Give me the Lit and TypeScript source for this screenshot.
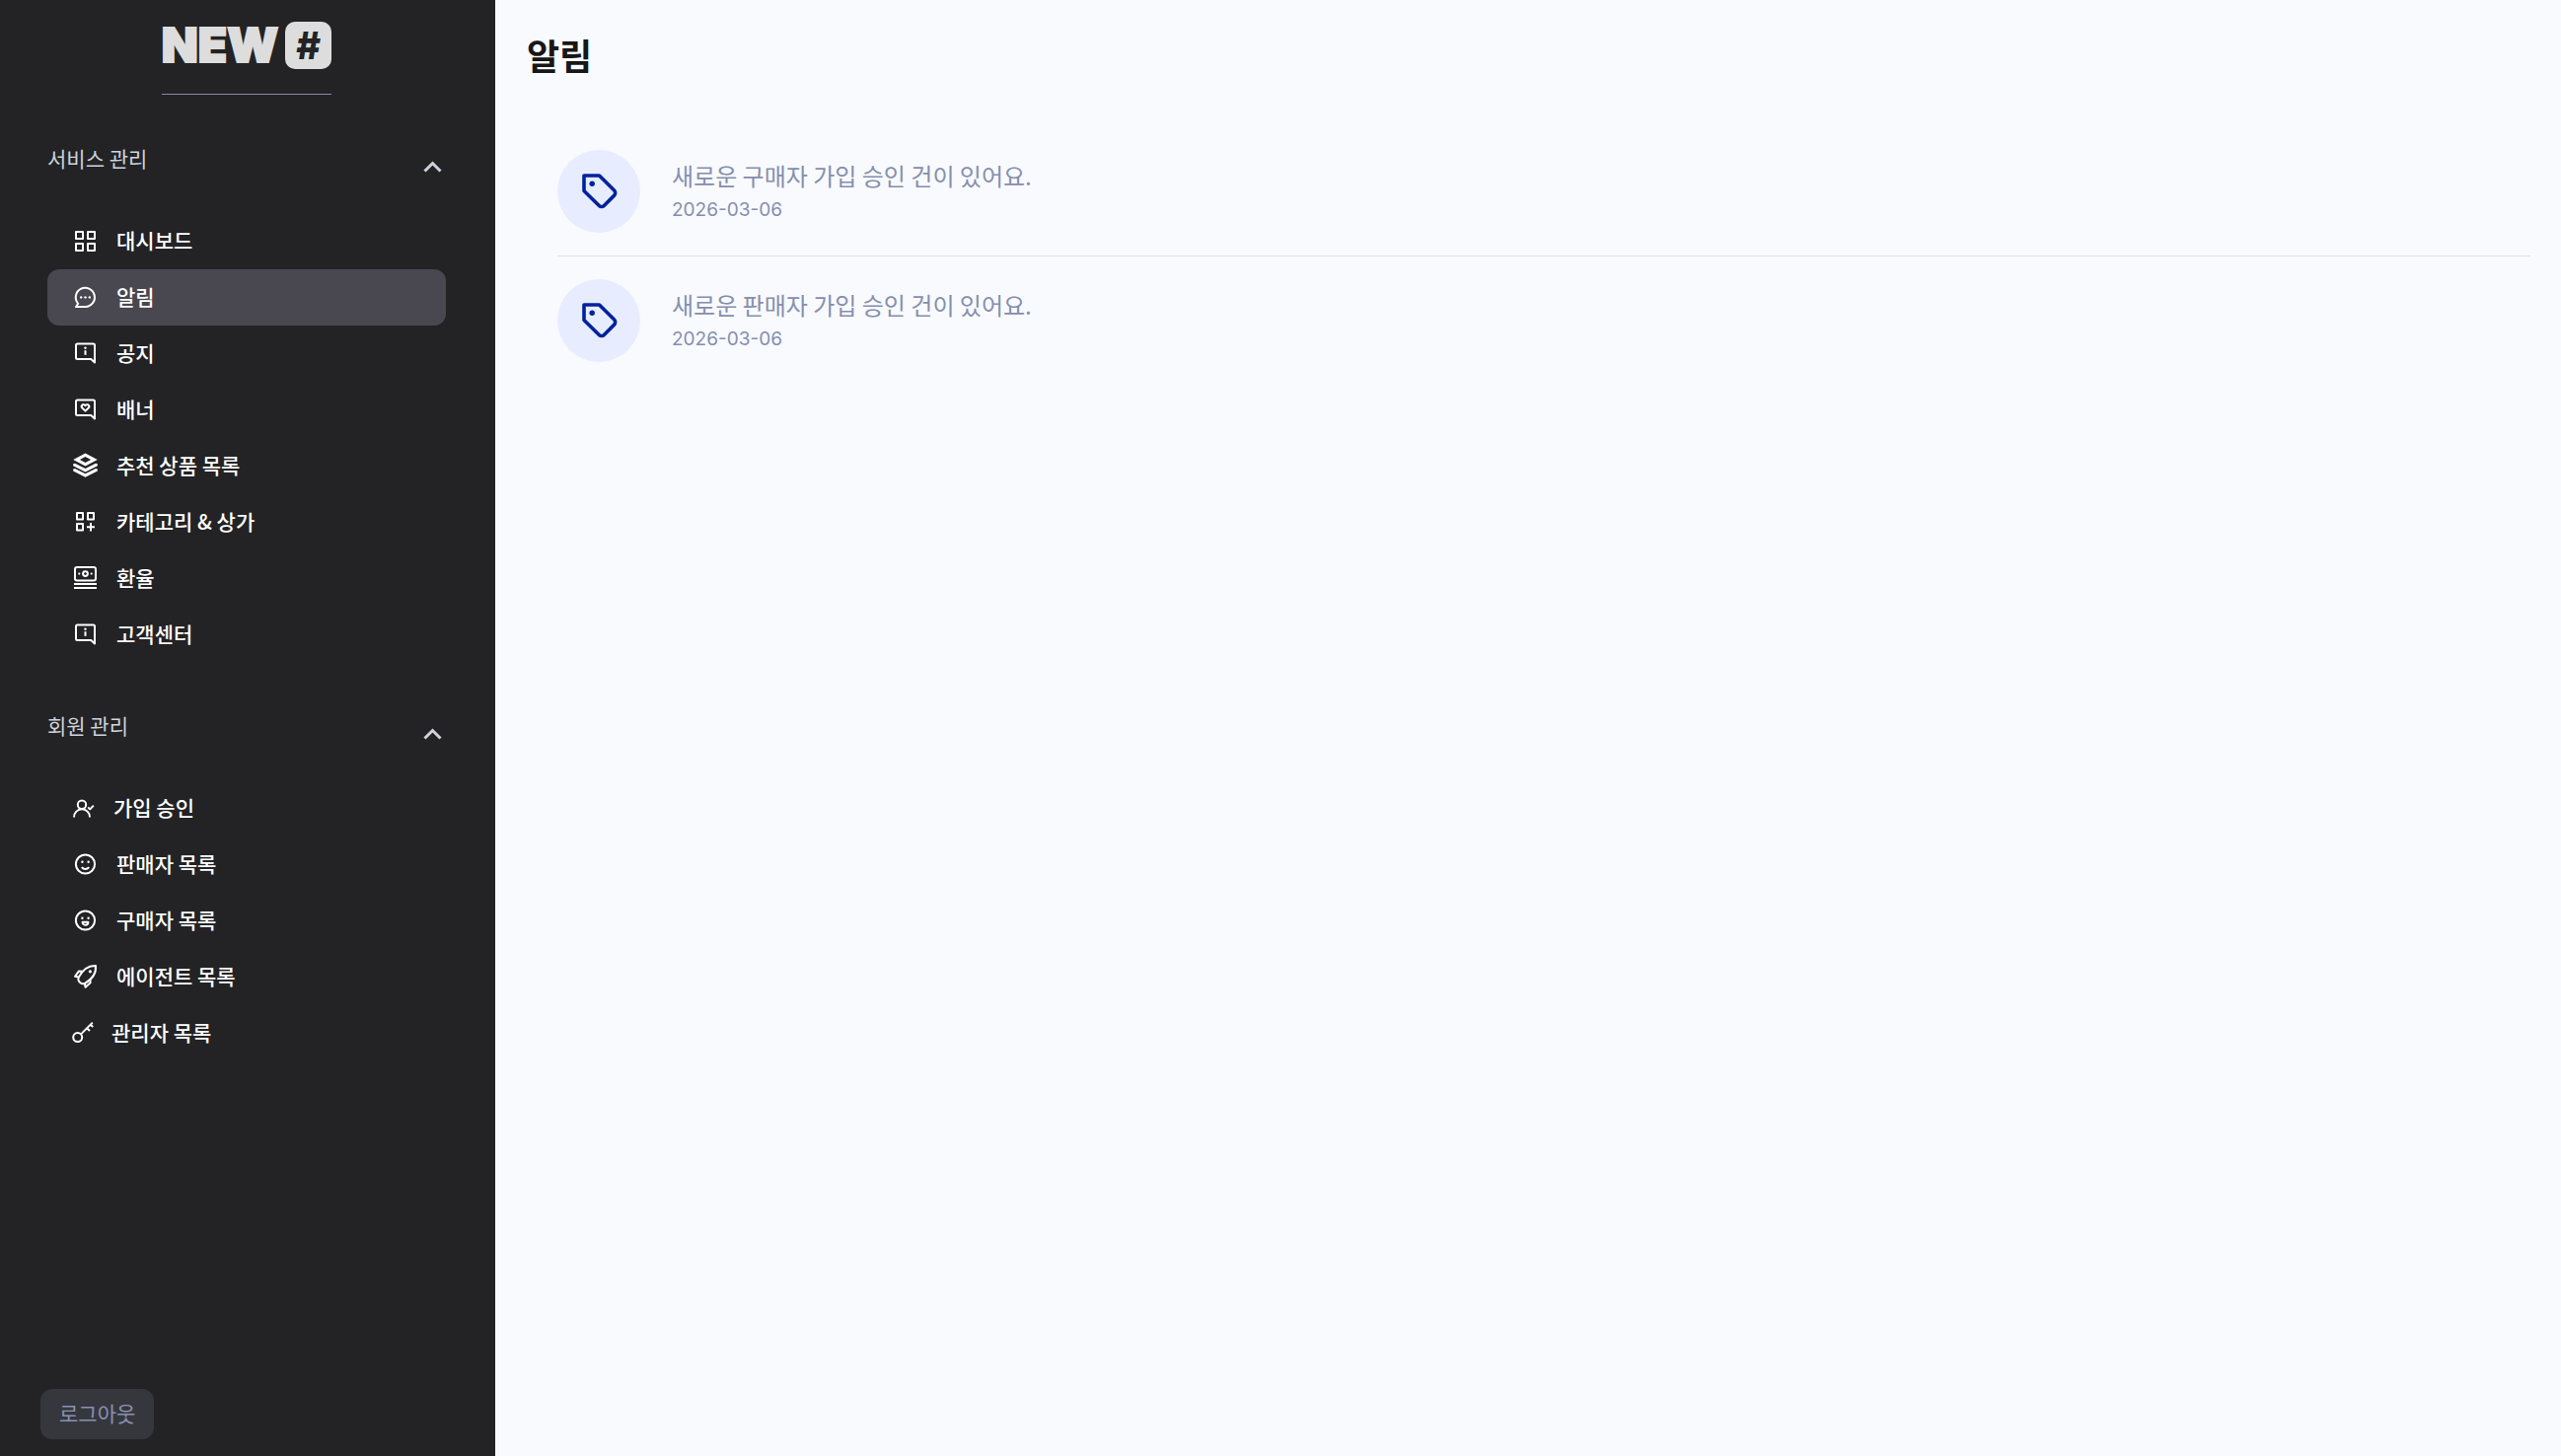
import { LitElement, html, css, svg, nothing, type SVGTemplateResult } from "lit";
import { customElement, property, state } from "lit/decorators.js";
import { classMap } from "lit/directives/class-map.js";

interface MenuItem {
  label: string;
  icon: string;
  active?: boolean;
}

interface MenuSection {
  title: string;
  items: MenuItem[];
}

interface Notice {
  message: string;
  date: string;
}

const SECTIONS: MenuSection[] = [
  {
    title: "서비스 관리",
    items: [
      { label: "대시보드", icon: "grid" },
      { label: "알림", icon: "chat", active: true },
      { label: "공지", icon: "info" },
      { label: "배너", icon: "heart" },
      { label: "추천 상품 목록", icon: "layers" },
      { label: "카테고리 & 상가", icon: "category" },
      { label: "환율", icon: "money" },
      { label: "고객센터", icon: "info" },
    ],
  },
  {
    title: "회원 관리",
    items: [
      { label: "가입 승인", icon: "approve" },
      { label: "판매자 목록", icon: "smile" },
      { label: "구매자 목록", icon: "laugh" },
      { label: "에이전트 목록", icon: "rocket" },
      { label: "관리자 목록", icon: "key" },
    ],
  },
];

const NOTICES: Notice[] = [
  { message: "새로운 구매자 가입 승인 건이 있어요.", date: "2026-03-06" },
  { message: "새로운 판매자 가입 승인 건이 있어요.", date: "2026-03-06" },
];

const bubble = svg`<path d="M6.5 4.5H22.5a1.5 1.5 0 0 1 1.5 1.5V23.5L20.3 20H6.5a1.5 1.5 0 0 1-1.5-1.5V6a1.5 1.5 0 0 1 1.5-1.5z"/>`;
const face = svg`<circle cx="14.5" cy="14" r="9.6"/>
  <circle class="solid" cx="11.4" cy="11.8" r="1.2"/><circle class="solid" cx="17.6" cy="11.8" r="1.2"/>`;

/* Each glyph: drawing width and shapes on a 29-unit-high canvas. */
const ICONS: Record<string, { width: number; shape: SVGTemplateResult }> = {
  grid: {
    width: 28,
    shape: svg`<rect x="5" y="5" width="7" height="7"/><rect x="17" y="5" width="7" height="7"/>
      <rect x="5" y="17" width="7" height="7"/><rect x="17" y="17" width="7" height="7"/>`,
  },
  chat: {
    width: 28,
    shape: svg`<path d="M14.5 24H5l2.2-3.2A9.6 9.6 0 1 1 14.5 24z"/>
      <circle class="solid" cx="10.2" cy="14.4" r="1.2"/><circle class="solid" cx="14.5" cy="14.4" r="1.2"/>
      <circle class="solid" cx="18.8" cy="14.4" r="1.2"/>`,
  },
  info: {
    width: 28,
    shape: svg`${bubble}<circle class="solid" cx="14.5" cy="8.8" r="1.2"/><path d="M14.5 11.2v4.6"/>`,
  },
  heart: {
    width: 28,
    shape: svg`${bubble}<path d="M14.5 15.6l-3.200-3.100a2 2 0 0 1 0-2.800 2 2 0 0 1 3.200.5 2 2 0 0 1 3.200-.5 2 2 0 0 1 0 2.800z"/>`,
  },
  layers: {
    width: 28,
    shape: svg`<path class="solid" fill-rule="evenodd" d="M14.5 1.6L26.8 7.9 14.5 14.4 2.2 7.9zM14.5 4.9L8.9 7.9l5.6 3 5.6-3z"/>
      <path class="solid" d="M2.2 12.3l1.8-.6 10.5 5.4L25 11.7l1.8.6v2L14.5 20.4 2.2 14.3z"/>
      <path class="solid" d="M2.2 17.6l1.8-.6 10.5 5.3L25 17l1.8.6v2L14.5 25.8 2.2 19.6z"/>`,
  },
  category: {
    width: 28,
    shape: svg`<rect x="6" y="5" width="6" height="6.5"/><rect x="17" y="5" width="6" height="6.5"/>
      <rect x="6" y="16" width="6" height="6.5"/><path d="M20 15v8.4M16 19.2h8"/>`,
  },
  money: {
    width: 28,
    shape: svg`<rect x="4" y="3" width="21" height="13.4" rx="2"/><circle cx="14.5" cy="9.6" r="2.400"/>
      <circle class="solid" cx="8.3" cy="9.6" r="1.1"/><circle class="solid" cx="20.7" cy="9.6" r="1.1"/>
      <path d="M3 20h23M3 24h23"/>`,
  },
  approve: {
    width: 25,
    shape: svg`<circle cx="11" cy="10.8" r="4.2"/><path d="M3 23.4a8 8.2 0 0 1 16 0M17.2 13.4l2 2 3.600-3.800"/>`,
  },
  smile: {
    width: 28,
    shape: svg`${face}<path d="M10.800 17.200a4.600 4.600 0 0 0 7.400 0"/>`,
  },
  laugh: {
    width: 28,
    shape: svg`${face}<path d="M11.600 15.800h5.800a2.900 2.900 0 0 1-5.800 0z"/>`,
  },
  rocket: {
    width: 28,
    shape: svg`<path d="M25 3c-6.600-.4-12.400 2.600-17.200 11.600-.8 1.800-.8 3 .2 4.200l1.800 1.800c1.200 1 2.400 1 4.200.2C22.600 16 25.600 9.800 25 3z"/>
      <circle class="solid" cx="19.400" cy="8.800" r="1.600"/>
      <path d="M11.600 8.800L8 8.400 4 13.800l3.600.8M19.400 16.400l.2 3.800-5 4.600-.8-4"/>`,
  },
  key: {
    width: 23,
    shape: svg`<circle cx="6.700" cy="18.600" r="4.500"/><path d="M10 15.400L21.800 3.600M19.600 5.600l2.600 2.400M16 9.200l3 2.800"/>`,
  },
};

@customElement("menu-icon")
export class MenuIcon extends LitElement {
  @property() name = "grid";

  static styles = css`
    :host {
      display: block;
      flex: none;
    }
    .icon {
      display: block;
      fill: none;
      stroke: currentColor;
      stroke-width: 2;
      stroke-linejoin: round;
      stroke-linecap: butt;
    }
    .solid {
      fill: currentColor;
      stroke: none;
    }
  `;

  render() {
    const { width, shape } = ICONS[this.name];
    return html`<svg class="icon" width=${width} height="29" viewBox="0 0 ${width} 29" aria-hidden="true">${shape}</svg>`;
  }
}

@customElement("side-section")
export class SideSection extends LitElement {
  @property({ attribute: false }) section!: MenuSection;
  @state() private open = true;

  static styles = css`
    :host {
      display: block;
    }
    .head {
      display: flex;
      justify-content: space-between;
      width: 100%;
      height: 46px;
      padding: 0 4px 0 0;
      border: 0;
      background: none;
      color: #ced3dc;
      font: inherit;
      line-height: 28px;
      text-align: left;
      cursor: pointer;
    }
    .chevron {
      align-self: center;
      fill: none;
      stroke: currentColor;
      stroke-width: 3;
    }
    .chevron.closed {
      transform: rotate(180deg);
    }
    .list {
      margin: 24px 0 0;
      padding: 0;
      list-style: none;
    }
    .link {
      display: flex;
      align-items: center;
      gap: 18px;
      height: 57px;
      padding: 0 24px;
      border-radius: 12px;
      color: #ffffff;
      font-weight: 500;
      text-decoration: none;
    }
    .link.active {
      background: #494850;
    }
    .label {
      padding-bottom: 4px;
    }
  `;

  render() {
    return html`
      <button class="head" type="button" aria-expanded=${this.open} @click=${() => (this.open = !this.open)}>
        <span>${this.section.title}</span>
        <svg class=${classMap({ chevron: true, closed: !this.open })} width="20" height="14" viewBox="0 0 20 14" aria-hidden="true">
          <path d="M2.500 11.500L10.500 3.500l8 8" />
        </svg>
      </button>
      ${this.open
        ? html`<ul class="list">
            ${this.section.items.map(
              (item) => html`<li>
                <a class=${classMap({ link: true, active: !!item.active })} href="#" aria-current=${item.active ? "page" : nothing}>
                  <menu-icon name=${item.icon}></menu-icon>
                  <span class="label">${item.label}</span>
                </a>
              </li>`,
            )}
          </ul>`
        : nothing}
    `;
  }
}

@customElement("app-root")
export class AppRoot extends LitElement {
  static styles = css`
    :host {
      display: flex;
      min-height: 100vh;
      background: #f8fafe;
      color: #171717;
      font-family: "Noto Sans CJK KR", "Noto Sans", sans-serif;
      font-size: 21px;
      line-height: 32px;
    }
    .side {
      display: flex;
      flex: none;
      flex-direction: column;
      box-sizing: border-box;
      width: 502px;
      padding: 22px 50px 17px 48px;
      background: #232325;
    }
    .brand {
      display: flex;
      align-items: center;
      align-self: center;
      gap: 7px;
      margin-bottom: 50px;
      padding-bottom: 25px;
      border-bottom: 1px solid #8589ab;
      color: #dddddd;
      font-family: Inter, sans-serif;
      font-weight: 900;
      font-size: 48px;
      line-height: 48px;
      text-decoration: none;
    }
    .word {
      -webkit-text-stroke: 2px currentColor;
    }
    .hash {
      width: 47px;
      border-radius: 10px;
      background: #dddddd;
      color: #232325;
      font-weight: 800;
      font-size: 38px;
      text-align: center;
    }
    .sections {
      display: grid;
      gap: 49px;
    }
    .logout {
      align-self: flex-start;
      margin: auto 0 0 -7px;
      padding: 8px 19px 11px;
      border: 0;
      border-radius: 12px;
      background: #36373d;
      color: #8a91b2;
      font: inherit;
      cursor: pointer;
    }
    .main {
      flex: 1;
      min-width: 0;
      padding: 31px 31px 32px 32px;
    }
    .title {
      margin: 0;
      font-weight: 700;
      font-size: 36px;
      line-height: 48px;
    }
    .notices {
      margin: 50px 0 0 31px;
      padding: 0;
      list-style: none;
    }
    .notice {
      display: flex;
      align-items: center;
      gap: 32px;
      padding: 23px 0;
    }
    .notice + .notice {
      border-top: 1px solid #dfe2e8;
    }
    .badge {
      display: grid;
      flex: none;
      place-items: center;
      width: 84px;
      height: 84px;
      border-radius: 50%;
      background: #e7edff;
      color: #00229c;
    }
    .message {
      margin: 0;
      color: #868eae;
      font-size: 24px;
      line-height: 36px;
    }
    .date {
      display: block;
      padding-top: 2px;
      color: #868eae;
      font-family: Inter, sans-serif;
      font-size: 19px;
      line-height: 30px;
    }
  `;

  render() {
    return html`
      <aside class="side">
        <a class="brand" href="#"><span class="word">NEW</span><span class="hash">#</span></a>
        <nav class="sections" aria-label="메뉴">
          ${SECTIONS.map((s) => html`<side-section .section=${s}></side-section>`)}
        </nav>
        <button class="logout" type="button">로그아웃</button>
      </aside>
      <main class="main">
        <h1 class="title">알림</h1>
        <ul class="notices">
          ${NOTICES.map(
            (n) => html`<li class="notice">
              <span class="badge">
                <svg width="42" height="42" viewBox="-2 -1 42 42" fill="none" stroke="currentColor" stroke-width="3.600" stroke-linejoin="round" aria-hidden="true">
                  <path d="M4 4H19.500L34.600 19.100a3.500 3.500 0 0 1 0 5L24.300 34.500a3.500 3.500 0 0 1-5 0L4 19.500z" />
                  <circle cx="12.200" cy="12.200" r="2.700" fill="currentColor" stroke="none" />
                </svg>
              </span>
              <div>
                <p class="message">${n.message}</p>
                <time class="date" datetime=${n.date}>${n.date}</time>
              </div>
            </li>`,
          )}
        </ul>
      </main>
    `;
  }
}
